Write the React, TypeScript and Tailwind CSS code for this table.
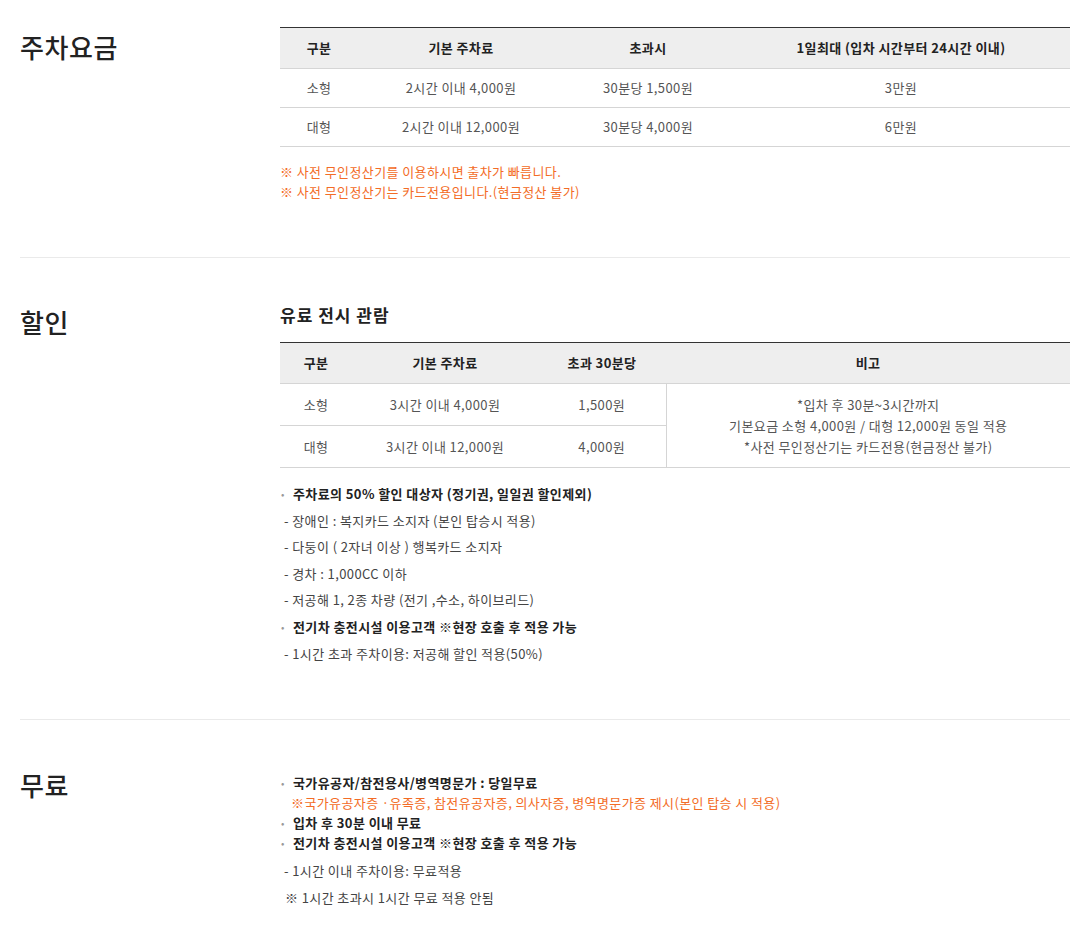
const font = { fontFamily: '"Noto Sans CJK KR", "Noto Sans", sans-serif' };

const Bullet = ({ children, bold = true }: { children: React.ReactNode; bold?: boolean }) => (
  <div className="flex items-center">
    <span className="w-[13px] pl-[1px] text-[10px] text-[#999]">•</span>
    <span className={bold ? 'font-semibold text-[#222]' : 'text-[#333]'}>{children}</span>
  </div>
);

const Dash = ({ children }: { children: React.ReactNode }) => (
  <div className="pl-[4px] text-[#444]">- {children}</div>
);

const SectionTitle = ({ children }: { children: React.ReactNode }) => (
  <h2 className="w-[260px] shrink-0 text-[26px] leading-[40px] font-medium text-[#222] tracking-[0.6px]">{children}</h2>
);

const App = () => {
  return (
    <div className="bg-white pl-[20px] pr-[10px] text-[13px] tracking-[0.4px]" style={font}>
      {/* 주차요금 */}
      <section className="flex pt-[27px] pb-[55px] border-b border-[#eaeaea]">
        <SectionTitle>주차요금</SectionTitle>
        <div className="flex-1">
          <table className="w-full border-collapse border-t border-t-[#333] text-center">
            <thead>
              <tr className="bg-[#eeeeee] h-[41px] text-[#222] border-b border-[#d5d5d5]">
                <th className="w-[78px] font-semibold">구분</th>
                <th className="w-[206px] font-semibold">기본 주차료</th>
                <th className="w-[168px] font-semibold">초과시</th>
                <th className="font-semibold">1일최대 (입차 시간부터 24시간 이내)</th>
              </tr>
            </thead>
            <tbody className="text-[#555]">
              <tr className="h-[39px] border-b border-[#d5d5d5]">
                <td>소형</td>
                <td>2시간 이내 4,000원</td>
                <td>30분당 1,500원</td>
                <td>3만원</td>
              </tr>
              <tr className="h-[39px] border-b border-[#d5d5d5]">
                <td>대형</td>
                <td>2시간 이내 12,000원</td>
                <td>30분당 4,000원</td>
                <td>6만원</td>
              </tr>
            </tbody>
          </table>
          <div className="mt-[15px] text-[#f36c26] leading-[20px]">
            <p>※ 사전 무인정산기를 이용하시면 출차가 빠릅니다.</p>
            <p>※ 사전 무인정산기는 카드전용입니다.(현금정산 불가)</p>
          </div>
        </div>
      </section>

      {/* 할인 */}
      <section className="flex pt-[44px] pb-[52px] border-b border-[#eaeaea]">
        <SectionTitle>할인</SectionTitle>
        <div className="flex-1">
          <h3 className="text-[17px] leading-[26px] font-bold text-[#222] mb-[14px] tracking-[1px]">유료 전시 관람</h3>
          <table className="w-full border-collapse border-t border-t-[#333] text-center">
            <thead>
              <tr className="bg-[#eeeeee] h-[41px] text-[#222] border-b border-[#d5d5d5]">
                <th className="w-[72px] font-semibold">구분</th>
                <th className="w-[186px] font-semibold">기본 주차료</th>
                <th className="w-[128px] font-semibold">초과 30분당</th>
                <th className="font-semibold">비고</th>
              </tr>
            </thead>
            <tbody className="text-[#555]">
              <tr className="h-[42px] border-b border-[#d5d5d5]">
                <td>소형</td>
                <td>3시간 이내 4,000원</td>
                <td>1,500원</td>
                <td rowSpan={2} className="border-l border-[#d5d5d5] leading-[21px]">
                  *입차 후 30분~3시간까지
                  <br />
                  기본요금 소형 4,000원 / 대형 12,000원 동일 적용
                  <br />
                  *사전 무인정산기는 카드전용(현금정산 불가)
                </td>
              </tr>
              <tr className="h-[42px] border-b border-[#d5d5d5]">
                <td>대형</td>
                <td>3시간 이내 12,000원</td>
                <td>4,000원</td>
              </tr>
            </tbody>
          </table>
          <div className="mt-[13px] leading-[26.6px]">
            <Bullet>주차료의 50% 할인 대상자 (정기권, 일일권 할인제외)</Bullet>
            <Dash>장애인 : 복지카드 소지자 (본인 탑승시 적용)</Dash>
            <Dash>다둥이 ( 2자녀 이상 ) 행복카드 소지자</Dash>
            <Dash>경차 : 1,000CC 이하</Dash>
            <Dash>저공해 1, 2종 차량 (전기 ,수소, 하이브리드)</Dash>
            <Bullet>전기차 충전시설 이용고객 ※현장 호출 후 적용 가능</Bullet>
            <Dash>1시간 초과 주차이용: 저공해 할인 적용(50%)</Dash>
          </div>
        </div>
      </section>

      {/* 무료 */}
      <section className="flex pt-[45px] pb-[20px]">
        <SectionTitle>무료</SectionTitle>
        <div className="flex-1 pt-[8px]">
          <div className="leading-[20px]">
            <Bullet>국가유공자/참전용사/병역명문가 : 당일무료</Bullet>
            <div className="pl-[11px] text-[#f36c26]">
              ※국가유공자증 ·유족증, 참전유공자증, 의사자증, 병역명문가증 제시(본인 탑승 시 적용)
            </div>
            <Bullet>입차 후 30분 이내 무료</Bullet>
            <Bullet>전기차 충전시설 이용고객 ※현장 호출 후 적용 가능</Bullet>
          </div>
          <div className="mt-[4px] leading-[27px] text-[#444]">
            <div className="pl-[4px]">- 1시간 이내 주차이용: 무료적용</div>
            <div className="pl-[5px]">※ 1시간 초과시 1시간 무료 적용 안됨</div>
          </div>
        </div>
      </section>
    </div>
  );
};

export default App;
